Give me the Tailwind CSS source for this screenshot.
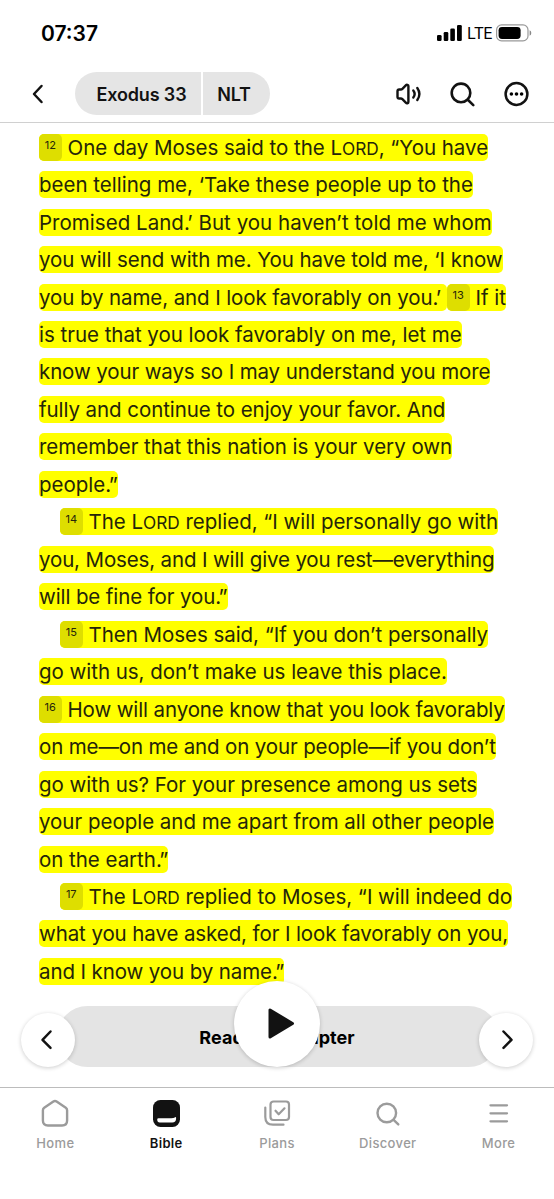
<!DOCTYPE html>
<html lang="en">
<head>
	<meta charset="UTF-8">
	<meta name="viewport" content="width=device-width, initial-scale=1.0">
	<title>Exodus 33 NLT</title>
	<script src="https://cdn.jsdelivr.net/npm/@tailwindcss/browser@4"></script>
</head>
<body class="flex h-[1199px] flex-col overflow-hidden bg-white font-['Inter',sans-serif] text-[#121212]">
	<!-- Status bar -->
	<div class="flex h-[68px] shrink-0 items-center justify-between pr-[22px] pl-[40px] text-black">
		<span class="pl-px text-[21px] font-semibold">07:37</span>
		<div class="flex items-center pb-[2px]">
			<svg class="h-[16px] w-[25px]" viewBox="0 0 25 16"><rect y="10" width="4.6" height="6" rx="1.3"/><rect x="6.7" y="7" width="4.6" height="9" rx="1.3"/><rect x="13.3" y="3.5" width="4.6" height="12.5" rx="1.3"/><rect x="20" width="4.8" height="16" rx="1.3"/></svg>
			<span class="ml-[5px] w-[24px] text-[16px] tracking-[-0.8px]">LTE</span>
			<svg class="ml-[5px] h-[18px] w-[36px]" viewBox="0 0 36 18"><rect x=".6" y=".9" width="31.4" height="16" rx="5" fill="none" stroke="#999" stroke-width="1.2"/><rect x="2.6" y="2.9" width="22" height="12" rx="3.4"/><path d="M33.6 6.2q1.7.8 1.7 2.8t-1.7 2.8z" fill="#888"/></svg>
		</div>
	</div>

	<!-- Reader header -->
	<header class="flex h-[55px] shrink-0 items-center justify-between border-b border-[#d0d0d0] pr-[25px] pb-[3px] pl-[30px]">
		<div class="flex items-center">
			<svg class="h-[24px] w-[16px]" viewBox="0 0 16 24" fill="none" stroke="currentColor" stroke-width="2.5" stroke-linecap="round" stroke-linejoin="round"><path d="M11.5 4 4 12l7.5 8"/></svg>
			<div class="ml-[29px] flex h-[43px] gap-[2px] overflow-hidden rounded-full text-[18px] font-semibold">
				<button class="w-[126px] bg-[#e5e5e5] pt-px pl-[7px] tracking-[-0.15px]">Exodus 33</button>
				<button class="w-[67px] bg-[#e5e5e5] pt-px pr-[5px] tracking-[-0.15px]">NLT</button>
			</div>
		</div>
		<div class="flex items-center gap-[26px]">
			<svg class="h-[28px] w-[28px]" viewBox="0 0 28 28" fill="none" stroke="currentColor" stroke-width="2.4" stroke-linecap="round" stroke-linejoin="round"><path d="M4.2 9.5h1.5q1 0 1.7-.7l3.4-3.5q.7-.7 1.6-.5 1 .2 1 1.3v15.8q0 1.1-1 1.3-.9.2-1.6-.5l-3.4-3.5q-.7-.7-1.7-.7H4.2q-1.7 0-1.7-1.7v-5.6q0-1.7 1.7-1.7z"/><path d="M18.3 10.5q2.7 3.5 0 7M22.3 8q4.2 6 0 12"/></svg>
			<svg class="h-[28px] w-[28px]" viewBox="0 0 28 28" fill="none" stroke="currentColor" stroke-width="2.6" stroke-linecap="round"><circle cx="12" cy="12.9" r="9.3"/><path d="m18.8 19.7 5.500 5.400"/></svg>
			<svg class="h-[26px] w-[26px]" viewBox="0 0 26 26"><circle cx="13.500" cy="13" r="10.900" fill="none" stroke="currentColor" stroke-width="2.500"/><circle cx="8.400" cy="13" r="1.800"/><circle cx="13.500" cy="13" r="1.800"/><circle cx="18.600" cy="13" r="1.800"/></svg>
		</div>
	</header>

	<main class="relative h-[964px] shrink-0 px-[39px] pt-[5.4px]">
		<!-- Verses, one row per line -->
		<div class="text-[20.5px] leading-[27px] *:flex *:h-[37.47px] *:items-center [&_b]:mr-[6px] [&_b]:h-[27px] [&_b]:w-[22.5px] [&_b]:rounded-[5px] [&_b]:bg-[#dede00] [&_b]:text-center [&_b]:text-[11px] [&_b]:leading-[22px] [&_b]:font-normal [&_i]:tracking-[-2.5px] [&_i]:not-italic [&_mark]:h-[27px] [&_mark]:rounded-[5px] [&_mark]:bg-[#ffff00] [&_mark]:whitespace-pre [&_mark]:text-[#25250a] [&_small]:text-[17.25px]">
			<p><mark class="flex"><b>12</b><span class="tracking-[-0.02px]">One day Moses said to the L<small>ORD</small>, “You have</span></mark></p>
			<p><mark>been telling me, ‘Take these people up to the</mark></p>
			<p><mark class="tracking-[0.03px]">Promised Land<i>.</i>’ But you haven’t told me whom</mark></p>
			<p><mark class="tracking-[-0.07px]">you will send with me. You have told me, ‘I know</mark></p>
			<p><mark class="w-[408px] tracking-[-0.1px]">you by name, and I look favorably on you<i>.</i>’ </mark><mark class="flex"><b>13</b><span>If it</span></mark></p>
			<p><mark class="tracking-[-0.02px]">is true that you look favorably on me, let me</mark></p>
			<p><mark class="tracking-[-0.12px]">know your ways so I may understand you more</mark></p>
			<p><mark class="tracking-[-0.07px]">fully and continue to enjoy your favor. And</mark></p>
			<p><mark class="tracking-[-0.01px]">remember that this nation is your very own</mark></p>
			<p><mark>people<i>.</i>”</mark></p>
			<p class="pl-[21px]"><mark class="flex"><b>14</b><span class="tracking-[-0.02px]">The L<small>ORD</small> replied, “I will personally go with</span></mark></p>
			<p><mark class="tracking-[-0.14px]">you, Moses, and I will give you rest—everything</mark></p>
			<p><mark class="tracking-[-0.11px]">will be fine for you<i>.</i>”</mark></p>
			<p class="pl-[21px]"><mark class="flex"><b>15</b><span class="tracking-[-0.04px]">Then Moses said, “If you don’t personally</span></mark></p>
			<p><mark class="tracking-[-0.03px]">go with us, don’t make us leave this place.</mark></p>
			<p><mark class="flex"><b>16</b><span class="tracking-[-0.12px]">How will anyone know that you look favorably</span></mark></p>
			<p><mark class="tracking-[-0.14px]">on me—on me and on your people—if you don’t</mark></p>
			<p><mark class="tracking-[-0.03px]">go with us? For your presence among us sets</mark></p>
			<p><mark class="tracking-[-0.02px]">your people and me apart from all other people</mark></p>
			<p><mark class="tracking-[-0.03px]">on the earth<i>.</i>”</mark></p>
			<p class="pl-[21px]"><mark class="flex"><b>17</b><span class="tracking-[-0.02px]">The L<small>ORD</small> replied to Moses, “I will indeed do</span></mark></p>
			<p><mark class="tracking-[-0.1px]">what you have asked, for I look favorably on you,</mark></p>
			<p><mark class="tracking-[-0.11px]">and I know you by name<i>.</i>”</mark></p>
		</div>

		<button class="mt-[16px] ml-[18px] block h-[61px] w-[442px] rounded-full bg-[#e4e4e4] pt-px pr-[2px] text-[18px] font-bold tracking-[0.05px] text-black">Read Full Chapter</button>

		<!-- Floating audio and chapter controls -->
		<button class="absolute top-[889.5px] left-[21px] flex h-[54px] w-[54px] items-center justify-center rounded-full bg-white shadow-[0_1px_4px_rgba(0,0,0,0.2)]">
			<svg class="h-[24px] w-[16px]" viewBox="0 0 16 24" fill="none" stroke="currentColor" stroke-width="2.5" stroke-linecap="round" stroke-linejoin="round"><path d="m10.5 3.500-8 8.300 8 8"/></svg>
		</button>
		<button class="absolute top-[858px] left-[234px] h-[86px] w-[86px] rounded-full bg-white shadow-[0_1px_4px_rgba(0,0,0,0.2)]">
			<svg class="ml-[33px] h-[34px] w-[28px]" viewBox="0 0 28 34" fill="currentColor" stroke="currentColor" stroke-width="3" stroke-linejoin="round"><path d="M3 3v27l22.500-13.500z"/></svg>
		</button>
		<button class="absolute top-[889.5px] left-[479px] flex h-[54px] w-[54px] items-center justify-center rounded-full bg-white shadow-[0_1px_4px_rgba(0,0,0,0.2)]">
			<svg class="h-[24px] w-[16px]" viewBox="0 0 16 24" fill="none" stroke="currentColor" stroke-width="2.5" stroke-linecap="round" stroke-linejoin="round"><path d="m5.500 3.500 8 8.300-8 8"/></svg>
		</button>
	</main>

	<!-- Tab bar -->
	<nav class="grid h-[112px] shrink-0 grid-cols-5 border-t border-[#bcbcbc] pt-[10px] text-[13px] font-medium tracking-[0.35px] text-[#9b9b9b] *:flex *:flex-col *:items-center *:gap-[6px] [&_svg]:h-[30px] [&_svg]:w-[30px]">
		<a>
			<svg viewBox="0 0 30 30" fill="none" stroke="currentColor" stroke-width="2.4" stroke-linejoin="round"><path d="M2.900 12.300q0-1.600 1.300-2.500l9.200-6.300q1.600-1.100 3.200 0l9.200 6.300q1.300.9 1.300 2.500v10.200q0 5-5 5H7.900q-5 0-5-5z"/></svg>
			<span>Home</span>
		</a>
		<a class="text-[#121212]">
			<svg viewBox="0 0 30 30"><rect x="2" y="2" width="27" height="27" rx="7.5" fill="currentColor"/><path d="M6.200 21.600q0-1.400 1.400-1.400h12.500q2.700 0 4.100-1 .9-.5.9.5v.9q0 3.900-3.900 3.900H8.700q-2.500 0-2.500-2.900z" fill="#fff"/></svg>
			<span class="font-semibold">Bible</span>
		</a>
		<a>
			<svg viewBox="0 0 30 30" fill="none" stroke="currentColor" stroke-width="2.2" stroke-linecap="round" stroke-linejoin="round"><rect x="8.500" y="3.500" width="18.500" height="18.500" rx="3"/><path d="M3.300 9.500v9.500q0 7.700 7.700 7.700h10.500M13.500 12.700l3.200 3.600 5.800-6"/></svg>
			<span>Plans</span>
		</a>
		<a>
			<svg viewBox="0 0 30 30" fill="none" stroke="currentColor" stroke-width="2.4" stroke-linecap="round"><circle cx="13.800" cy="15" r="9.300"/><path d="m20.600 21.800 4.700 4.600"/></svg>
			<span>Discover</span>
		</a>
		<a>
			<svg viewBox="0 0 30 30" fill="none" stroke="currentColor" stroke-width="2.3" stroke-linecap="round"><path d="M6.500 7.300H23M6.500 15.300H23M6.500 23.300H23"/></svg>
			<span>More</span>
		</a>
	</nav>
</body>
</html>
